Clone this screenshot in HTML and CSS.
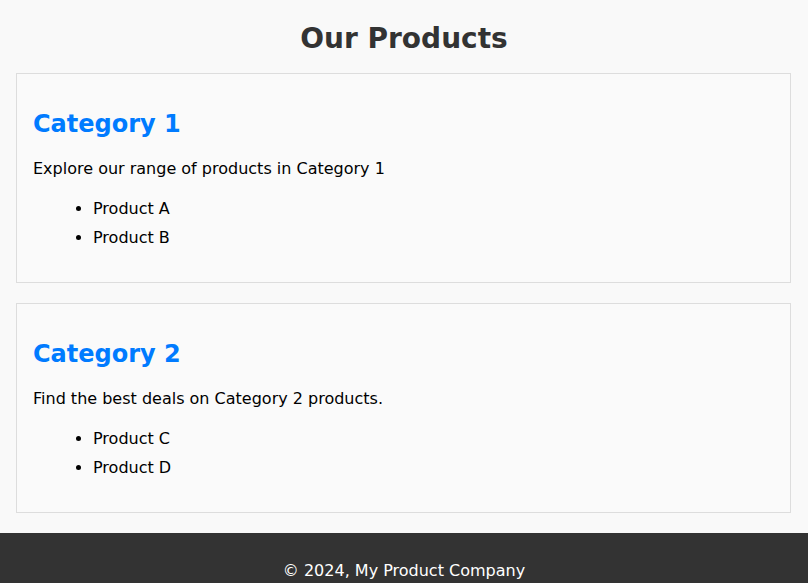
FILE: index.html
```html
<!DOCTYPE html>
<html>
<head>
    <meta charset="utf-8">
    <title>Our Products</title>
    <link rel="stylesheet" href="styles.css">
</head>
<body>
    <header class="page-header">
        <h1>Our Products</h1>
    </header>

    <main class="products">
        <section class="category">
            <h2>Category 1</h2>
            <p>Explore our range of products in Category 1</p>
            <ul>
                <li>Product A</li>
                <li>Product B</li>
            </ul>
        </section>

        <section class="category">
            <h2>Category 2</h2>
            <p>Find the best deals on Category 2 products.</p>
            <ul>
                <li>Product C</li>
                <li>Product D</li>
            </ul>
        </section>
    </main>

    <footer class="page-footer">
        <p>&copy; 2024, My Product Company</p>
    </footer>
</body>
</html>
```

FILE: styles.css
```css
html,
body {
    margin: 0;
    padding: 0;
    background: #f9f9f9;
    color: #000;
    font-family: "DejaVu Sans", Verdana, sans-serif;
    font-size: 16px;
    line-height: 1.5;
}

.page-header {
    padding: 22px 16px 17px;
    text-align: center;
}

.page-header h1 {
    margin: 0;
    font-size: 28px;
    line-height: 1.2;
    color: #333;
}

.products {
    padding: 0 17px 0 16px;
}

.category {
    margin-bottom: 20px;
    padding: 16px;
    border: 1px solid #ddd;
    background: #fafafa;
}

.category h2 {
    margin: 20px 0 18px;
    font-size: 24px;
    line-height: 29px;
    color: #007bff;
}

.category p {
    margin: 16px 0;
}

.category ul {
    margin: 16px 0;
    padding-left: 60px;
}

.category li {
    margin-bottom: 5px;
}

.page-footer {
    padding: 10px;
    background: #333;
    color: #fff;
    text-align: center;
}

.page-footer p {
    margin: 16px 0;
}
```
